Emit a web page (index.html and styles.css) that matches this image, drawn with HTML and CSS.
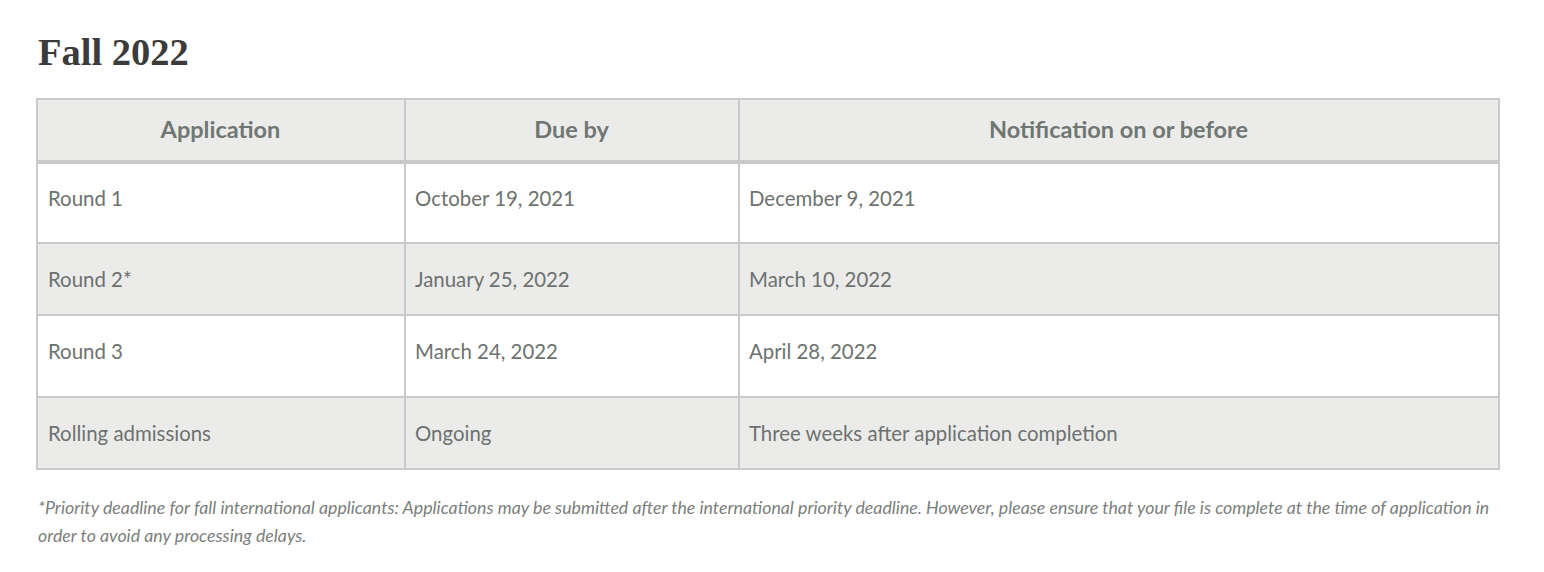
FILE: index.html
```html
<!DOCTYPE html>
<html lang="en">
<head>
<meta charset="utf-8">
<title>Fall 2022</title>
<link rel="stylesheet" href="styles.css">
</head>
<body>
<section class="deadlines">
  <h2 class="title">Fall 2022</h2>
  <table class="dates">
    <colgroup>
      <col class="c1"><col class="c2"><col class="c3">
    </colgroup>
    <thead>
      <tr class="head"><th>Application</th><th>Due by</th><th>Notification on or before</th></tr>
    </thead>
    <tbody>
      <tr class="r1"><td>Round 1</td><td>October 19, 2021</td><td>December 9, 2021</td></tr>
      <tr class="r2 alt"><td>Round 2*</td><td>January 25, 2022</td><td>March 10, 2022</td></tr>
      <tr class="r3"><td>Round 3</td><td>March 24, 2022</td><td>April 28, 2022</td></tr>
      <tr class="r4 alt"><td>Rolling admissions</td><td>Ongoing</td><td>Three weeks after application completion</td></tr>
    </tbody>
  </table>
  <p class="note">*Priority deadline for fall international applicants: Applications may be submitted after the international priority deadline. However, please ensure that your file is complete at the time of application in order to avoid any processing delays.</p>
</section>
</body>
</html>
```
FILE: styles.css
```css
html, body {
  margin: 0;
  padding: 0;
  background: #ffffff;
}
.deadlines {
  padding: 27px 44px 0 36px;
}
.title {
  margin: 0 0 21px 2px;
  font-family: "Liberation Serif", "Times New Roman", serif;
  font-weight: 700;
  font-size: 38.5px;
  line-height: 50px;
  color: #3b3b3b;
}
.dates {
  width: 1462px;
  border-collapse: separate;
  border-spacing: 0;
  border-top: 2px solid #c9c9c9;
  border-left: 2px solid #c9c9c9;
  font-family: Lato, "Source Sans Pro", sans-serif;
  font-size: 20.4px;
  color: #6d726f;
  table-layout: fixed;
}
.c1 { width: 368px; }
.c2 { width: 334px; }
.c3 { width: 760px; }
.dates th,
.dates td {
  box-sizing: border-box;
  border-right: 2px solid #c9c9c9;
  border-bottom: 2px solid #c9c9c9;
  padding: 0 10px 0 9px;
  vertical-align: middle;
  text-align: left;
}
.dates tr > td:first-child { padding-left: 10px; }
.dates th {
  background: #ebebea;
  font-size: 23.5px;
  font-weight: 700;
  color: #707773;
  text-align: center;
  border-bottom-width: 4px;
  padding-bottom: 2px;
}
.head th { height: 64px; }
.r1 td { height: 80px; padding-bottom: 10px; }
.r2 td { height: 72px; }
.r3 td { height: 82px; padding-bottom: 10px; }
.r4 td { height: 72px; }
.alt td { background: #ebebea; }
.note {
  margin: 23px 0 0 2px;
  font-family: Lato, "Source Sans Pro", sans-serif;
  font-style: italic;
  font-size: 17.75px;
  line-height: 28px;
  color: #7b807d;
}
```
